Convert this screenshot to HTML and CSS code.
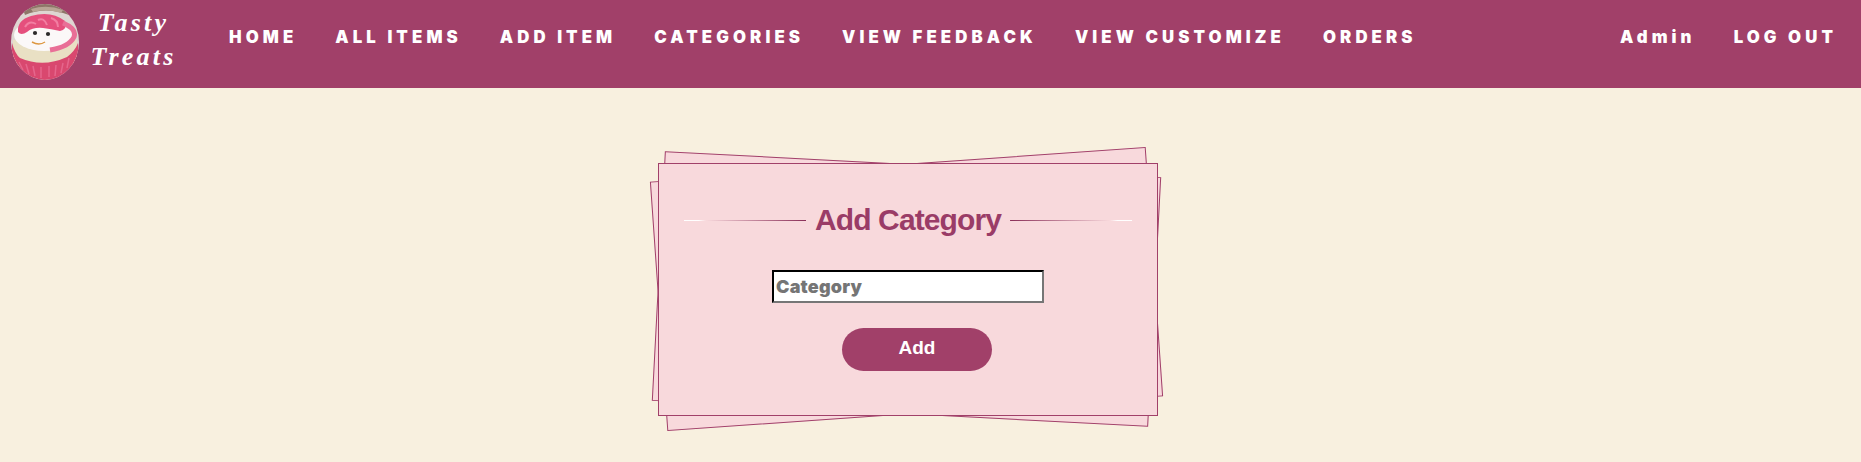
FILE: index.html
```html
<!DOCTYPE html>
<html lang="en">
<head>
    <meta charset="UTF-8">
    <meta name="viewport" content="width=device-width, initial-scale=1.0">
    <title>Add Category</title>
    <link rel="stylesheet" href="styles.css">
</head>
<body>
    <nav class="navbar">
        <a class="brand" href="#">
            <svg class="brand-logo" viewBox="0 0 68 76">
                <defs>
                    <clipPath id="logoClip"><ellipse cx="34" cy="38" rx="34" ry="38"/></clipPath>
                </defs>
                <g clip-path="url(#logoClip)">
                    <rect width="68" height="76" fill="#ded6d2"/>
                    <path d="M10 0H60L58 11Q34 2 14 11Z" fill="#8e7668"/>
                    <path d="M20 5Q36 0 52 6L50 9Q36 4 22 8Z" fill="#b9a595"/>
                    <path d="M2 36V60Q34 78 66 58V36Z" fill="#e9e0c4"/>
                    <ellipse cx="33" cy="31" rx="30" ry="16" fill="#fbf8f8"/>
                    <path d="M1 39Q4 50 9 54Q32 64 56 53Q64 47 67 39L68 60Q56 76 32 76Q8 72 1 56Z" fill="#d9486f"/>
                    <path d="M8 58L12 66M15 60L18 70M22 62L24 72M30 63V74M38 62V73M45 61L44 72M52 59L50 69M58 54L56 64" fill="none" stroke="#e5668c" stroke-width="1.5"/>
                    <path d="M7 28Q6 16 20 12Q40 6 54 17Q57 25 49 27Q40 25 32 24Q22 23 16 28Q10 32 7 28Z" fill="#e54f7d"/>
                    <path d="M14 23Q18 16 25 20M27 16Q33 13 36 21M40 14Q47 16 47 23" fill="none" stroke="#f27ea2" stroke-width="2"/>
                    <path d="M52 19Q66 25 63 33Q58 43 39 46" fill="none" stroke="#e96f97" stroke-width="5"/>
                    <circle cx="24" cy="29" r="2.1" fill="#2c2a2a"/>
                    <circle cx="37" cy="30" r="2.1" fill="#2c2a2a"/>
                    <path d="M21 38Q28 42 34 38" fill="none" stroke="#dd9740" stroke-width="1.5"/>
                </g>
            </svg>
            <span class="brand-name">Tasty<br>Treats</span>
        </a>
        <ul class="nav-links">
            <li><a href="#">HOME</a></li>
            <li><a href="#">ALL ITEMS</a></li>
            <li><a href="#">ADD ITEM</a></li>
            <li><a href="#">CATEGORIES</a></li>
            <li><a href="#">VIEW FEEDBACK</a></li>
            <li><a href="#">VIEW CUSTOMIZE</a></li>
            <li><a href="#">ORDERS</a></li>
        </ul>
        <ul class="nav-links nav-right">
            <li><a href="#">Admin</a></li>
            <li><a href="#">LOG OUT</a></li>
        </ul>
    </nav>

    <main class="page">
        <form class="card">
            <div class="card-title">
                <span class="title-line"></span>
                <h2>Add Category</h2>
                <span class="title-line title-line-right"></span>
            </div>
            <input class="card-input" type="text" placeholder="Category">
            <button class="card-button" type="button">Add</button>
        </form>
    </main>
</body>
</html>
```
FILE: styles.css
```css
* {
    box-sizing: border-box;
}
html, body {
    height: 100%;
}
body {
    margin: 0;
    background-color: #f8f0df;
    font-family: "Liberation Sans", Arial, sans-serif;
    overflow: hidden;
}
.navbar {
    display: flex;
    align-items: center;
    height: 88px;
    padding-left: 11px;
    padding-right: 24px;
    background-color: #a14069;
}
.brand {
    display: flex;
    align-items: center;
    gap: 7px;
    margin-right: 48px;
    color: #fff;
    text-decoration: none;
}
.brand-logo {
    width: 68px;
    height: 76px;
    margin-top: -5px;
}
.brand-name {
    width: 95px;
    margin-bottom: 9px;
    font-family: "Liberation Serif", "Times New Roman", serif;
    font-size: 26px;
    font-weight: bold;
    font-style: italic;
    line-height: 34px;
    letter-spacing: 3.2px;
    text-align: center;
}
.nav-links {
    display: flex;
    gap: 38px;
    margin: 0 0 15px;
    padding: 0;
    list-style: none;
}
.nav-links a {
    color: #fff;
    font-family: Inter, "Noto Sans", sans-serif;
    font-size: 16.8px;
    font-weight: 900;
    letter-spacing: 4.1px;
    text-decoration: none;
}
.nav-right {
    margin-left: auto;
}
.page {
    isolation: isolate;
    padding-top: 75px;
    padding-left: 658px;
}
.card {
    position: relative;
    display: flex;
    flex-direction: column;
    align-items: center;
    width: 500px;
    height: 253px;
    padding: 39px 25px 0;
    background-color: #f8d9dc;
    border: 1px solid #a14069;
}
.card::before,
.card::after {
    content: "";
    position: absolute;
    top: 0;
    left: -1px;
    width: 495px;
    height: 248px;
    z-index: -1;
    background-color: #f8d9dc;
    border: 1px solid #a14069;
}
.card::before {
    transform: rotate(3deg);
}
.card::after {
    transform: rotate(-4deg);
}
.card-title {
    display: flex;
    align-items: center;
    gap: 9px;
    width: 100%;
}
.card-title h2 {
    margin: 0;
    color: #9a3c67;
    font-size: 30px;
    font-weight: bold;
    letter-spacing: -0.9px;
    white-space: nowrap;
}
.title-line {
    flex: 1;
    height: 1px;
    background: linear-gradient(to right, #fff 0, #fff 12%, #f8d9dc 18%, #8a2f58 100%);
}
.title-line-right {
    transform: scaleX(-1);
}
.card-input {
    width: 272px;
    height: 33px;
    margin-top: 33px;
    padding: 1px 2px;
    background-color: #fff;
    border: 2px inset #767676;
    border-top-color: #201a1c;
    border-left-color: #201a1c;
    font-family: Inter, "Noto Sans", sans-serif;
    font-size: 18px;
    font-weight: 900;
    letter-spacing: 0.2px;
}
.card-input::placeholder {
    color: #757575;
    opacity: 1;
}
.card-button {
    width: 150px;
    height: 43px;
    margin-top: 25px;
    margin-left: 18px;
    padding-bottom: 4px;
    background-color: #a14069;
    border: none;
    border-radius: 22px;
    color: #fff;
    font-family: "Liberation Sans", Arial, sans-serif;
    font-size: 19px;
    font-weight: bold;
}
```
